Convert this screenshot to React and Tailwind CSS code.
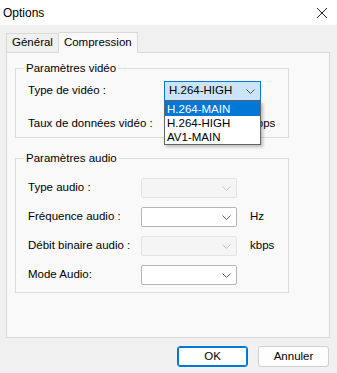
import React from "react";

const Chevron = ({ color = "#606060" }) => (
  <svg width="9" height="5" viewBox="0 0 9 5" fill="none">
    <path d="M0.5 0.5 L4.5 4.5 L8.5 0.5" stroke={color} strokeWidth="1" />
  </svg>
);

const Combo = ({ disabled, value, className = "" }) => (
  <div
    className={
      "flex items-center justify-between h-[20px] pl-[4px] pr-[5px] border rounded-[2px] " +
      (disabled
        ? "bg-[#f5f5f5] border-[#e3e3e3] "
        : "bg-white border-[#b4b4b4] ") +
      className
    }
  >
    <span>{value}</span>
    <Chevron color={disabled ? "#c8c8c8" : "#606060"} />
  </div>
);

const Row = ({ label, children, unit, labelW = "w-[113px]" }) => (
  <div className="flex items-center h-[20px] whitespace-nowrap">
    <span className={labelW + " shrink-0"}>{label}</span>
    {children}
    {unit && <span className="ml-[13px]">{unit}</span>}
  </div>
);

export default function App() {
  return (
    <div
      className="w-[337px] h-[373px] bg-[#f0f0f0] flex flex-col text-[11.5px] text-black overflow-hidden"
      style={{ fontFamily: '"Liberation Sans", Arial, sans-serif' }}
    >
      {/* TITLE BAR */}
      <div className="h-[25px] bg-white flex items-center justify-between pl-[3px] pr-[9px] shrink-0">
        <span className="text-[12px]">Options</span>
        <svg width="12" height="12" viewBox="0 0 12 12">
          <path d="M1 1 L11 11 M11 1 L1 11" stroke="#222" strokeWidth="1" />
        </svg>
      </div>

      {/* BODY */}
      <div className="flex flex-col px-[6px] pt-[6px]">
        {/* TABS */}
        <div className="flex items-end h-[21px]">
          <div className="h-[19px] px-[5px] flex items-center border border-b-0 border-[#d9d9d9] bg-[#f0f0f0]">
            Général
          </div>
          <div className="h-[21px] px-[5px] flex items-center border border-b-0 border-l-0 border-[#d9d9d9] bg-[#f9f9f9] -mb-px relative z-10">
            Compression
          </div>
        </div>

        {/* PANEL */}
        <div className="w-[324px] h-[286px] border border-[#d9d9d9] bg-[#f9f9f9] pl-[8px] pt-[8px]">
          {/* VIDEO GROUP */}
          <fieldset className="w-[274px] h-[77px] border border-[#dcdcdc] pl-[12px] pt-[6px]">
            <legend className="ml-[-4px] px-[2px] leading-[14px]">Paramètres vidéo</legend>
            <div className="flex flex-col gap-[13px]">
              <Row label="Type de vidéo :" labelW="w-[136px]">
                <div className="relative">
                  <div className="flex items-center justify-between w-[97px] h-[20px] pl-[4px] pr-[5px] border border-[#0078d7] bg-[#cce4f7]">
                    <span>H.264-HIGH</span>
                    <Chevron color="#505050" />
                  </div>
                  {/* DROPDOWN */}
                  <div className="absolute left-0 top-[20px] w-[97px] flex flex-col border border-[#646464] bg-white z-20 shadow-[2px_2px_3px_rgba(0,0,0,0.25)]">
                    <div className="h-[14px] leading-[14px] pl-[2px] bg-[#0078d7] text-white">H.264-MAIN</div>
                    <div className="h-[14px] leading-[14px] pl-[2px]">H.264-HIGH</div>
                    <div className="h-[14px] leading-[14px] pl-[2px]">AV1-MAIN</div>
                  </div>
                </div>
              </Row>
              <Row label="Taux de données vidéo :" labelW="w-[136px]">
                <div className="w-[97px]" />
                <span className="ml-[-10px]">kbps</span>
              </Row>
            </div>
          </fieldset>

          {/* AUDIO GROUP */}
          <fieldset className="w-[274px] h-[142px] mt-[13px] border border-[#dcdcdc] pl-[12px] pt-[13px]">
            <legend className="ml-[-4px] px-[2px] leading-[14px]">Paramètres audio</legend>
            <div className="flex flex-col gap-[9px]">
              <Row label="Type audio :">
                <Combo disabled className="w-[96px]" />
              </Row>
              <Row label="Fréquence audio :" unit="Hz">
                <Combo className="w-[96px]" />
              </Row>
              <Row label="Débit binaire audio :" unit="kbps">
                <Combo disabled className="w-[96px]" />
              </Row>
              <Row label="Mode Audio:">
                <Combo className="w-[96px]" />
              </Row>
            </div>
          </fieldset>
        </div>

        {/* BUTTONS */}
        <div className="flex justify-end gap-[10px] pr-[2px] mt-[8px]">
          <button className="w-[71px] h-[21px] bg-white border border-[#0078d7] rounded-[3px] shadow-[inset_0_0_0_1px_#0078d7]">
            OK
          </button>
          <button className="w-[71px] h-[21px] bg-[#fdfdfd] border border-[#d0d0d0] rounded-[3px]">
            Annuler
          </button>
        </div>
      </div>
    </div>
  );
}
